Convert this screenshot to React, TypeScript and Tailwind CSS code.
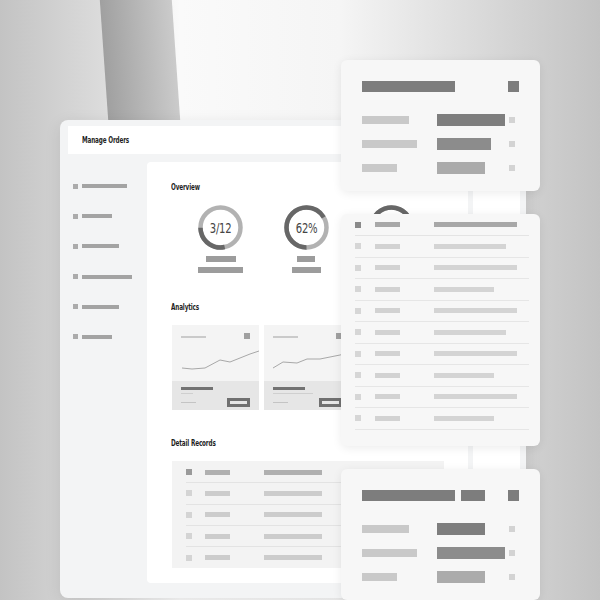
import React from "react";

/* ── data ── */

const sideItems = ["w-[45px]", "w-[30px]", "w-[37px]", "w-[50px]", "w-[37px]", "w-[30px]"];

const listRows = [
  "w-[72px]",
  "w-[83px]",
  "w-[60px]",
  "w-[83px]",
  "w-[72px]",
  "w-[83px]",
  "w-[60px]",
  "w-[83px]",
  "w-[60px]",
];

const charts = [
  { points: "10,29 20,30 33,29 48,21 58,23 78,15 87,12", sub: "w-[12px]" },
  { points: "9,29 19,23 33,24 43,20 56,20 76,16 87,13", sub: "w-[40px]" },
  { points: "6,28 18,26 30,22 44,24 58,18 72,17 87,12", sub: "w-[24px]" },
];

const title =
  "block origin-left scale-x-[0.7] whitespace-nowrap text-[9px] leading-[10px] font-bold tracking-[-0.2px] text-[#1f1f1f] font-['DejaVu_Sans_Condensed','DejaVu_Sans',sans-serif]";

/* ── pieces ── */

const Donut = ({ pct, start, label }: { pct: number; start: number; label?: string }) => {
  const c = 2 * Math.PI * 20;
  return (
    <div className="relative w-[45px] h-[45px]">
      <svg width="45" height="45" viewBox="0 0 45 45">
        <circle cx="22.5" cy="22.5" r="20" fill="none" stroke="#b2b2b2" strokeWidth="4.5" />
        <circle
          cx="22.5"
          cy="22.5"
          r="20"
          fill="none"
          stroke="#676767"
          strokeWidth="4.5"
          strokeDasharray={`${c * pct} ${c}`}
          transform={`rotate(${start - 90} 22.5 22.5)`}
        />
      </svg>
      {label && (
        <span className="absolute inset-0 flex items-center justify-center">
          <span className="block scale-x-[0.8] text-[14px] leading-[16px] text-[#454545] tracking-[-0.3px] font-['DejaVu_Sans_Condensed','DejaVu_Sans',sans-serif]">
            {label}
          </span>
        </span>
      )}
    </div>
  );
};

const ChartCard = ({ points, sub }: { points: string; sub: string }) => (
  <div className="w-[87px] h-[85px] flex flex-col shrink-0">
    <div className="h-[56px] bg-[#f4f4f4] flex flex-col">
      <div className="flex justify-between items-start px-[9px] pt-[8px]">
        <div className="mt-[3px] w-[25px] h-[1.5px] bg-[#cacaca]" />
        <div className="w-[6px] h-[6px] bg-[#a0a0a0]" />
      </div>
      <svg width="87" height="42" viewBox="0 0 87 42">
        <polyline points={points} fill="none" stroke="#a8a8a8" strokeWidth="1" />
      </svg>
    </div>
    <div className="h-[29px] bg-[#e6e6e6] px-[9px] pt-[6px]">
      <div className="w-[32px] h-[2.5px] bg-[#727272]" />
      <div className={`mt-[3px] ${sub} h-px bg-[#cfcfcf]`} />
      <div className="mt-[4px] flex items-center justify-between">
        <div className="w-[15px] h-px bg-[#c4c4c4]" />
        <div className="w-[23px] h-[9px] bg-[#707070] flex items-center justify-center">
          <div className="w-[17px] h-[3px] bg-[#e6e6e6]" />
        </div>
      </div>
    </div>
  </div>
);

const KeyValueCard = ({ top, extra }: { top: string; extra?: boolean }) => (
  <div
    className={`absolute left-[341px] ${top} w-[199px] h-[131px] rounded-[6px] bg-[#f7f7f7] shadow-[0_2px_10px_rgba(0,0,0,0.08)] px-[21px] pt-[21px]`}
  >
    <div className="flex items-center h-[11px]">
      <div className="w-[93px] h-[11px] bg-[#7d7d7d]" />
      {extra && <div className="ml-[6px] w-[24px] h-[11px] bg-[#7d7d7d]" />}
      <div className="ml-auto w-[11px] h-[11px] bg-[#7d7d7d]" />
    </div>
    <div className="mt-[22px] flex flex-col gap-[12px]">
      {[
        { l: "w-[47px]", b: extra ? "w-[48px]" : "w-[68px]", c: "bg-[#7e7e7e]" },
        { l: "w-[55px]", b: extra ? "w-[68px]" : "w-[54px]", c: "bg-[#8c8c8c]" },
        { l: "w-[35px]", b: "w-[48px]", c: "bg-[#ababab]" },
      ].map((r, i) => (
        <div key={i} className="flex items-center h-[12px]">
          <div className={`${r.l} h-[8px] bg-[#c9c9c9]`} />
          <div className="ml-auto flex items-center w-[72px]">
            <div className={`${r.b} h-[12px] ${r.c}`} />
          </div>
          <div className="w-[6px] h-[6px] bg-[#d3d3d3] mr-[4px]" />
        </div>
      ))}
    </div>
  </div>
);

/* ── main ── */

export default function App() {
  return (
    <div className="relative w-[600px] h-[600px] overflow-hidden bg-[linear-gradient(90deg,#c3c3c3_0px,#dcdcdc_104px,#fafafa_180px,#f5f5f5_340px,#d6d6d6_500px,#c3c3c3_600px)]">
      {/* slanted light strip */}
      <div className="absolute left-[104px] top-[-10px] w-[72px] h-[140px] skew-x-[4deg] bg-[linear-gradient(90deg,#a0a0a0,#cbcbcb)]" />

      {/* main window */}
      <div className="absolute left-[60px] top-[120px] w-[466px] h-[478px] rounded-[8px] bg-[#f3f4f5] shadow-[0_4px_16px_rgba(0,0,0,0.10)] pl-[8px] pr-[6px] pt-[6px] pb-[15px] flex flex-col">
        <div className="h-[28px] bg-white flex items-center pl-[14px] shrink-0">
          <span className={title}>Manage Orders</span>
        </div>
        <div className="mt-[8px] flex flex-1">
          {/* sidebar */}
          <div className="w-[79px] shrink-0 pl-[5px] pt-[21px] flex flex-col gap-[24.2px]">
            {sideItems.map((w, i) => (
              <div key={i} className="flex items-center gap-[4px] h-[6px]">
                <div className="w-[5px] h-[5px] bg-[#ababab]" />
                <div className={`${w} h-[4px] bg-[#a3a3a3]`} />
              </div>
            ))}
          </div>

          {/* content */}
          <div className="w-[321px] shrink-0 bg-white rounded-[4px] px-[24px] pt-[20px]">
            <div className="h-[10px] flex">
              <span className={title}>Overview</span>
            </div>
            <div className="mt-[13px] ml-[7px] flex">
              {[
                { pct: 0.28, start: 168, label: "3/12", a: "w-[30px]", b: "w-[45px]" },
                { pct: 0.66, start: 180, label: "62%", a: "w-[18px]", b: "w-[29px]" },
                { pct: 0.8, start: 250, label: "", a: "w-[24px]", b: "w-[36px]" },
              ].map((d, i) => (
                <div key={i} className="w-[85.5px] flex flex-col items-center">
                  <Donut pct={d.pct} start={d.start} label={d.label} />
                  <div className={`mt-[6px] ${d.a} h-[6px] bg-[#9c9c9c]`} />
                  <div className={`mt-[5px] ${d.b} h-[6px] bg-[#9c9c9c]`} />
                </div>
              ))}
            </div>

            <div className="mt-[29px] h-[10px] flex">
              <span className={title}>Analytics</span>
            </div>
            <div className="mt-[13px] ml-[1px] flex gap-[5px]">
              {charts.map((c, i) => (
                <ChartCard key={i} points={c.points} sub={c.sub} />
              ))}
            </div>

            <div className="mt-[28px] h-[10px] flex">
              <span className={title}>Detail Records</span>
            </div>
            <div className="mt-[13px] ml-[1px] bg-[#f3f3f3] pt-[1px] px-[14px]">
              {[0, 1, 2, 3, 4].map((i) => (
                <div
                  key={i}
                  className={`h-[21.3px] flex items-center ${i < 4 ? "border-b border-[#e3e3e3]" : ""}`}
                >
                  <div className={`w-[6px] h-[6px] ${i === 0 ? "bg-[#9a9a9a]" : "bg-[#d4d4d4]"}`} />
                  <div className={`ml-[13px] w-[25px] h-[5px] ${i === 0 ? "bg-[#b0b0b0]" : "bg-[#cccccc]"}`} />
                  <div className={`ml-[34px] w-[58px] h-[5px] ${i === 0 ? "bg-[#b0b0b0]" : "bg-[#cccccc]"}`} />
                </div>
              ))}
            </div>
          </div>

          {/* right column */}
          <div className="ml-[5px] flex-1 bg-white rounded-[4px]" />
        </div>
      </div>

      {/* floating cards */}
      <KeyValueCard top="top-[60px]" />

      <div className="absolute left-[341px] top-[214px] w-[199px] h-[232px] rounded-[6px] bg-[#f7f7f7] shadow-[0_2px_10px_rgba(0,0,0,0.08)] pl-[14px] pr-[11px]">
        <div className="h-[22px] flex items-center border-b border-[#e4e4e4]">
          <div className="w-[6px] h-[6px] bg-[#8a8a8a]" />
          <div className="ml-[14px] w-[25px] h-[5px] bg-[#a8a8a8]" />
          <div className="ml-[34px] w-[83px] h-[5px] bg-[#a8a8a8]" />
        </div>
        {listRows.map((w, i) => (
          <div key={i} className="h-[21.5px] flex items-center border-b border-[#e6e6e6]">
            <div className="w-[6px] h-[6px] bg-[#d6d6d6]" />
            <div className="ml-[14px] w-[25px] h-[5px] bg-[#d2d2d2]" />
            <div className={`ml-[34px] ${w} h-[5px] bg-[#d4d4d4]`} />
          </div>
        ))}
      </div>

      <KeyValueCard top="top-[469px]" extra />
    </div>
  );
}
